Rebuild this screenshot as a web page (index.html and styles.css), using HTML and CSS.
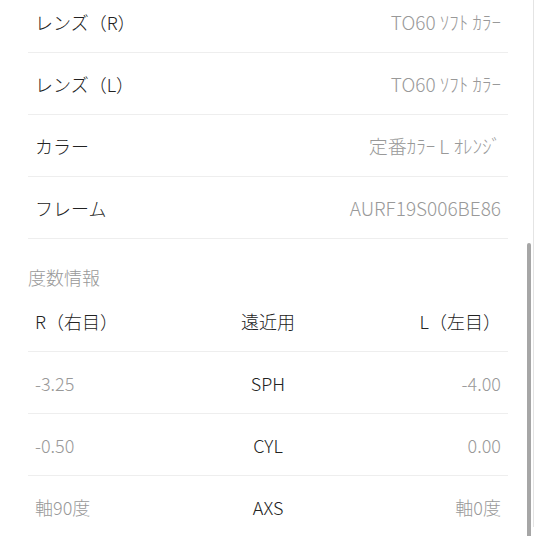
FILE: index.html
```html
<!DOCTYPE html>
<html lang="ja">
<head>
    <meta charset="UTF-8">
    <meta name="viewport" content="width=device-width, initial-scale=1.0">
    <title>注文詳細</title>
    <link rel="stylesheet" href="styles.css">
</head>
<body>
    <div class="page">
        <div class="list">
            <div class="row">
                <span class="label">レンズ（R）</span>
                <span class="value">TO60 ｿﾌﾄ ｶﾗｰ</span>
            </div>
            <div class="row">
                <span class="label">レンズ（L）</span>
                <span class="value">TO60 ｿﾌﾄ ｶﾗｰ</span>
            </div>
            <div class="row">
                <span class="label">カラー</span>
                <span class="value">定番ｶﾗｰ L ｵﾚﾝｼﾞ</span>
            </div>
            <div class="row">
                <span class="label">フレーム</span>
                <span class="value">AURF19S006BE86</span>
            </div>
        </div>

        <h2 class="section-title">度数情報</h2>

        <div class="grid">
            <div class="grid-row head">
                <span class="col-left">R（右目）</span>
                <span class="col-mid">遠近用</span>
                <span class="col-right">L（左目）</span>
            </div>
            <div class="grid-row">
                <span class="col-left num">-3.25</span>
                <span class="col-mid">SPH</span>
                <span class="col-right num">-4.00</span>
            </div>
            <div class="grid-row">
                <span class="col-left num">-0.50</span>
                <span class="col-mid">CYL</span>
                <span class="col-right num">0.00</span>
            </div>
            <div class="grid-row">
                <span class="col-left num">軸90度</span>
                <span class="col-mid">AXS</span>
                <span class="col-right num">軸0度</span>
            </div>
        </div>
    </div>

    <div class="scroll-thumb"></div>
</body>
</html>
```

FILE: styles.css
```css
html, body {
    margin: 0;
    padding: 0;
    background-color: #fff;
    overflow: hidden;
}
body {
    font-family: "Noto Sans CJK JP", "Noto Sans", sans-serif;
    font-size: 18px;
    font-weight: 300;
    color: #222;
    height: 536px;
}
.page {
    width: 505px;
    height: 536px;
    padding: 0 0 0 28px;
    border-right: 1px solid #e4e4e4;
}
.list {
    margin-top: -9px;
}
.row {
    display: flex;
    justify-content: space-between;
    align-items: center;
    height: 61px;
    padding: 0 7px;
    border-bottom: 1px solid #eee;
    width: 466px;
    line-height: 24px;
}
.value {
    color: #999;
    font-size: 19px;
}
.section-title {
    margin: 0;
    padding: 26px 0 1px;
    font-size: 18px;
    font-weight: 300;
    line-height: 24px;
    color: #999;
}
.grid-row {
    display: grid;
    grid-template-columns: 1fr 1fr 1fr;
    align-items: center;
    height: 61px;
    padding: 0 7px;
    width: 466px;
    border-bottom: 1px solid #eee;
    line-height: 24px;
}
.grid-row:last-child {
    border-bottom: none;
}
.col-mid {
    text-align: center;
}
.col-right {
    text-align: right;
}
.num {
    color: #999;
}
.scroll-thumb {
    position: fixed;
    left: 527px;
    top: 243px;
    width: 4px;
    bottom: 0;
    background-color: #a6a6a6;
    border-radius: 2px 2px 0 0;
}
```
